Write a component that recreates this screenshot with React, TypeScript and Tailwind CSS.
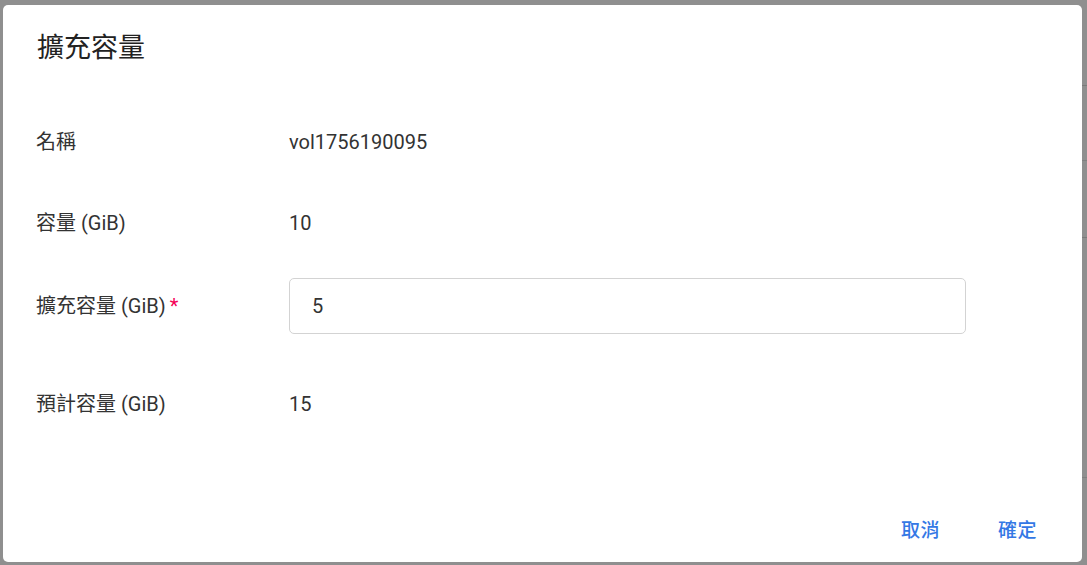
import React from "react";

const font = { fontFamily: 'Roboto, "Noto Sans CJK TC", "Noto Sans CJK SC", sans-serif' };

function Row({ label, children, h, required }: { label: string; children: React.ReactNode; h: string; required?: boolean }) {
  return (
    <div className={`grid grid-cols-[253px_1fr] items-center ${h}`}>
      <div className="text-[20px] leading-[28px] tracking-[0px] text-[#333]">
        {label}
        {required && <span className="ml-[4px] text-[#f50057]">*</span>}
      </div>
      <div className="text-[20px] leading-[28px] tracking-[0px] text-[#333]">{children}</div>
    </div>
  );
}

export default function App() {
  return (
    <div className="relative h-[565px] w-[1087px] overflow-hidden bg-[#8f8f8f]" style={font}>
      <div className="absolute right-0 top-[85px] h-px w-[5px] bg-[#7a7a7a]" />
      <div className="absolute right-0 top-[160px] h-px w-[5px] bg-[#808080]" />
      <div className="absolute right-0 top-[237px] h-px w-[5px] bg-[#7a7a7a]" />
      <div className="absolute right-0 top-[477px] h-px w-[5px] bg-[#808080]" />
      <div className="pl-[3px] pt-[5px]">
        <div className="flex h-[557px] w-[1079px] flex-col rounded-[5px] bg-white">
          <div className="flex h-[86px] items-center pl-[34px] text-[27px] font-normal leading-[36px] text-[#222]">
            擴充容量
          </div>
          <div className="pl-[33px]">
            <Row label="名稱" h="h-[102px]">vol1756190095</Row>
            <Row label="容量 (GiB)" h="h-[60px]">10</Row>
            <Row label="擴充容量 (GiB)" h="h-[106px]" required>
              <div className="flex h-[56px] w-[677px] items-center rounded-[5px] border border-[#d3d3d3] pl-[22px]">
                5
              </div>
            </Row>
            <Row label="預計容量 (GiB)" h="h-[90px]">15</Row>
          </div>
          <div className="flex-1" />
          <div className="flex h-[66px] items-center justify-end gap-[38px] pr-[35px] pt-[4px]">
            <button className="px-[10px] text-[19px] font-medium tracking-[0.5px] text-[#3478e5]">取消</button>
            <button className="px-[10px] text-[19px] font-medium tracking-[0.5px] text-[#3478e5]">確定</button>
          </div>
        </div>
      </div>
    </div>
  );
}
